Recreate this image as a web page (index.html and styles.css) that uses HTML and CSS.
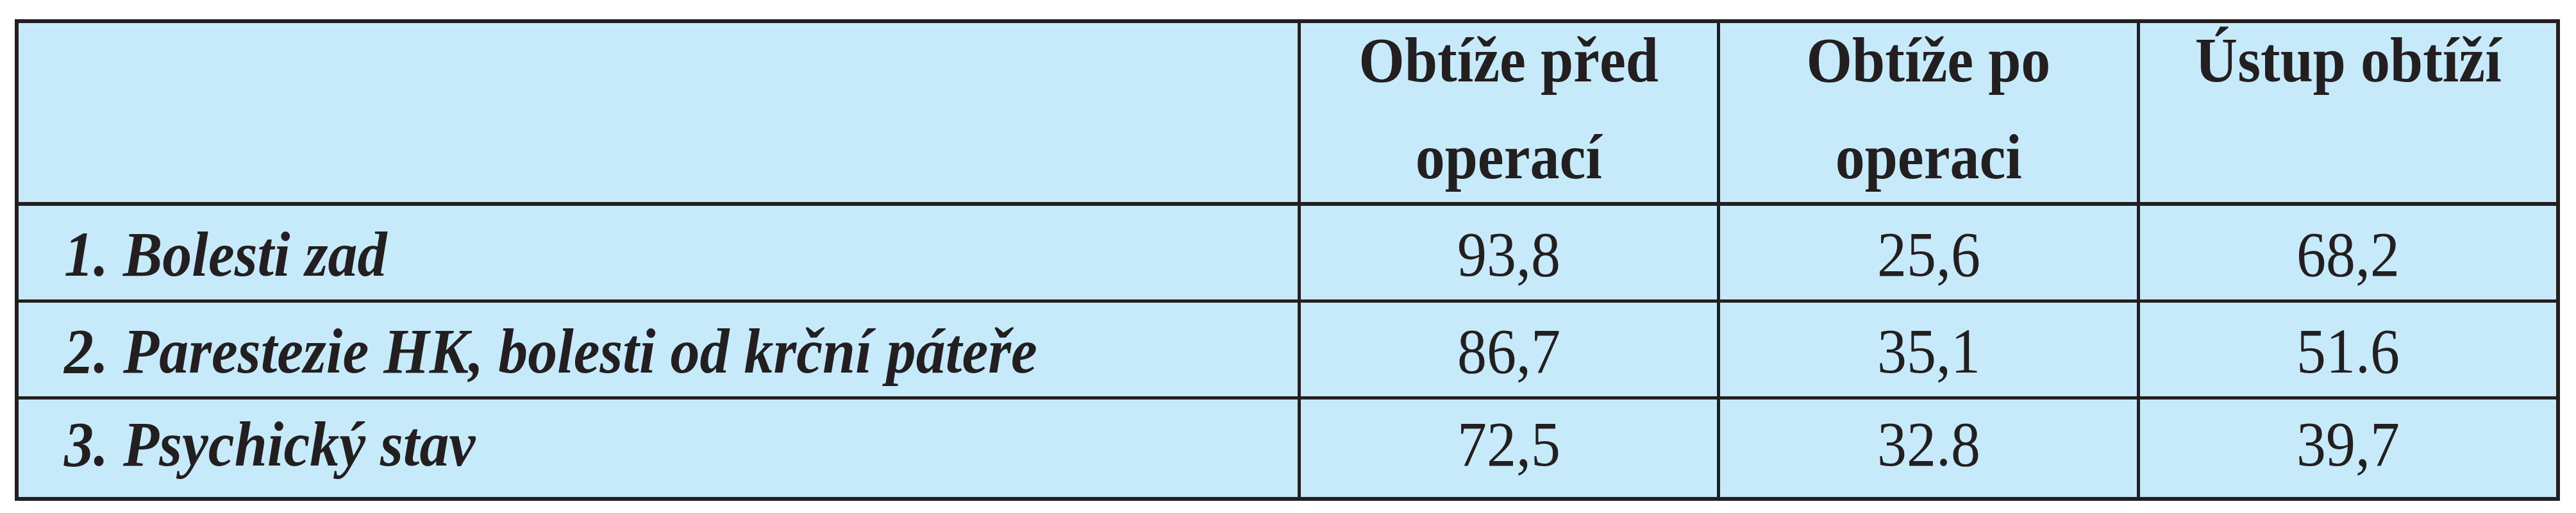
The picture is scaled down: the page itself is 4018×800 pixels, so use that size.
FILE: index.html
```html
<!DOCTYPE html>
<html lang="cs">
<head>
<meta charset="utf-8">
<title>Obtíže před a po operaci</title>
<link rel="stylesheet" href="styles.css">
</head>
<body>
<table class="results">
  <thead>
    <tr>
      <th class="c-label"></th>
      <th class="c-num"><div class="head"><span class="sq">Obtíže před</span><br><span class="sq">operací</span></div></th>
      <th class="c-num c-mid"><div class="head"><span class="sq">Obtíže po</span><br><span class="sq">operaci</span></div></th>
      <th class="c-num"><div class="head"><span class="sq">Ústup obtíží</span></div></th>
    </tr>
  </thead>
  <tbody>
    <tr class="r1">
      <td class="label"><span class="sq sq-left">1. Bolesti zad</span></td>
      <td class="num"><span class="sq">93,8</span></td>
      <td class="num"><span class="sq">25,6</span></td>
      <td class="num"><span class="sq">68,2</span></td>
    </tr>
    <tr class="r2">
      <td class="label"><span class="sq sq-left">2. Parestezie HK, bolesti od krční páteře</span></td>
      <td class="num"><span class="sq">86,7</span></td>
      <td class="num"><span class="sq">35,1</span></td>
      <td class="num"><span class="sq">51.6</span></td>
    </tr>
    <tr class="r3">
      <td class="label"><span class="sq sq-left">3. Psychický stav</span></td>
      <td class="num tick"><span class="sq">72,5</span></td>
      <td class="num tick"><span class="sq">32.8</span></td>
      <td class="num tick"><span class="sq">39,7</span></td>
    </tr>
  </tbody>
</table>
</body>
</html>
```

FILE: styles.css
```css
html, body {
  margin: 0;
  padding: 0;
  background: #ffffff;
}

body {
  padding: 30px 0 0 23px;
  font-family: "Liberation Serif", "Times New Roman", serif;
  color: #231f20;
}

.results {
  box-sizing: border-box;
  width: 3970px;
  table-layout: fixed;
  border-collapse: separate;
  border-spacing: 0;
  border: 6px solid #231f20;
  background: #c7eafb;
  font-size: 100px;
}

.results th,
.results td {
  box-sizing: border-box;
  padding: 0;
  vertical-align: top;
  text-align: center;
}

.results th {
  height: 279px;
  font-weight: bold;
}

.c-label {
  width: 1995px;
}

.c-num {
  width: 654px;
  border-left: 5px solid #231f20;
}

.c-mid {
  width: 655px;
}

.head {
  line-height: 151px;
  margin-top: -18px;
  margin-bottom: -30px;
}

.sq {
  display: inline-block;
  transform: scaleX(0.92);
  transform-origin: center;
  white-space: nowrap;
}

.sq-left {
  transform-origin: left center;
}

.results td {
  line-height: 110px;
  padding-top: 21px;
}

.results tr.r1 td {
  height: 152px;
  border-top: 6px solid #231f20;
}

.results tr.r2 td {
  height: 151px;
  border-top: 5px solid #231f20;
}

.results tr.r3 td {
  height: 157px;
  border-top: 5px solid #231f20;
  padding-top: 15px;
}

.results td.label {
  text-align: left;
  padding-left: 71px;
  font-weight: bold;
  font-style: italic;
}

.results td.num {
  border-left: 5px solid #231f20;
}

.tick {
  position: relative;
}

.tick::after {
  content: "";
  position: absolute;
  left: -5px;
  bottom: -13px;
  width: 5px;
  height: 7px;
  background: #231f20;
}
```
